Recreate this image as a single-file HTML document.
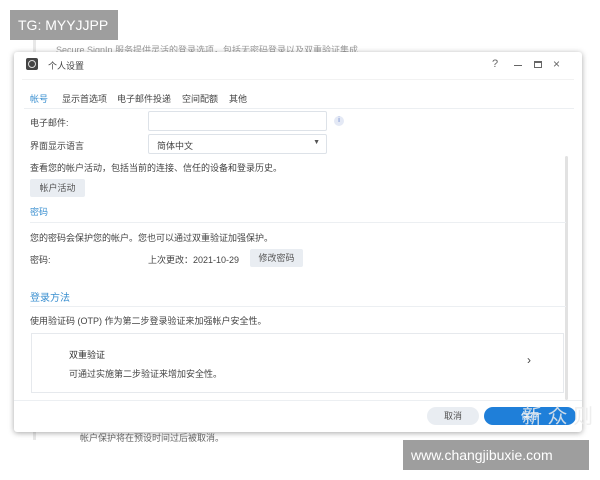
<!DOCTYPE html>
<html><head><meta charset="utf-8"><style>
*{margin:0;padding:0;box-sizing:border-box}
body{width:600px;height:480px;background:#fff;position:relative;overflow:hidden;font-family:"Liberation Sans","Noto Sans CJK SC",sans-serif;font-size:9px;color:#444}
.a{position:absolute;white-space:nowrap}
.btn{position:absolute;background:#e9edf2;border-radius:2px;text-align:center;color:#555}
.blue{color:#3a8fd0}
.line{position:absolute;height:1px;background:#eceff2}
</style></head><body>
<div class="a" style="left:33px;top:40px;width:3px;height:400px;background:#e8e8e8"></div>
<div class="a" style="left:56px;top:43px;color:#999;font-size:9px">Secure SignIn 服务提供灵活的登录选项，包括无密码登录以及双重验证集成</div>
<div class="a" style="left:80px;top:431px;color:#666;font-size:9px">帐户保护将在预设时间过后被取消。</div>
<div class="a" style="left:10px;top:10px;width:108px;height:30px;background:#9e9e9e;color:#fff;font-size:14px;line-height:30px;padding-left:8px">TG: MYYJJPP</div>

<div class="a" style="left:14px;top:52px;width:568px;height:380px;background:#fff;box-shadow:0 1px 6px rgba(0,0,0,.35);border-radius:3px">
 <div class="a" style="left:12px;top:6px;width:12px;height:12px;background:#444;border-radius:2px"><div class="a" style="left:2px;top:2px;width:8px;height:8px;border:1.2px solid #ddd;border-radius:50%"></div></div>
 <div class="a" style="left:34px;top:7px;color:#444">个人设置</div>
 <div class="a" style="left:478px;top:6px;color:#666;font-size:11px">?</div>
 <div class="a" style="left:500px;top:13px;width:8px;height:1px;background:#666"></div>
 <div class="a" style="left:520px;top:9px;width:8px;height:7px;border:1px solid #666;border-top-width:2px"></div>
 <div class="a" style="left:539px;top:5px;color:#666;font-size:12px">×</div>
 <div class="line" style="left:8px;top:27px;width:552px;background:#f2f2f2"></div>
 <div class="a blue" style="left:16px;top:40px">帐号</div>
 <div class="a" style="left:48px;top:40px;color:#444">显示首选项</div>
 <div class="a" style="left:103px;top:40px;color:#444">电子邮件投递</div>
 <div class="a" style="left:168px;top:40px;color:#444">空间配额</div>
 <div class="a" style="left:215px;top:40px;color:#444">其他</div>
 <div class="line" style="left:10px;top:56px;width:550px"></div>
 <div class="a" style="left:16px;top:64px">电子邮件:</div>
 <div class="a" style="left:134px;top:59px;width:179px;height:20px;border:1px solid #dde2e8;border-radius:2px"></div>
 <div class="a" style="left:320px;top:64px;width:10px;height:10px;border-radius:50%;background:#e4e9f5;color:#5a78c8;font-size:7px;text-align:center;line-height:10px">i</div>
 <div class="a" style="left:16px;top:87px">界面显示语言</div>
 <div class="a" style="left:134px;top:82px;width:179px;height:20px;border:1px solid #dde2e8;border-radius:2px;padding:4px 0 0 8px">简体中文<span style="position:absolute;right:6px;top:4px;font-size:7px;color:#555">▼</span></div>
 <div class="a" style="left:551px;top:104px;width:3px;height:244px;background:#e2e2e2;border-radius:2px"></div>
 <div class="a" style="left:16px;top:109px">查看您的帐户活动，包括当前的连接、信任的设备和登录历史。</div>
 <div class="btn" style="left:16px;top:127px;width:55px;height:18px;line-height:18px">帐户活动</div>
 <div class="a blue" style="left:16px;top:153px">密码</div>
 <div class="line" style="left:16px;top:170px;width:536px"></div>
 <div class="a" style="left:16px;top:179px">您的密码会保护您的帐户。您也可以通过双重验证加强保护。</div>
 <div class="a" style="left:16px;top:201px">密码:</div>
 <div class="a" style="left:134px;top:201px">上次更改：2021-10-29</div>
 <div class="btn" style="left:236px;top:197px;width:53px;height:18px;line-height:18px">修改密码</div>
 <div class="a blue" style="left:16px;top:237px;font-size:10px">登录方法</div>
 <div class="line" style="left:16px;top:254px;width:536px"></div>
 <div class="a" style="left:16px;top:262px">使用验证码 (OTP) 作为第二步登录验证来加强帐户安全性。</div>
 <div class="a" style="left:17px;top:281px;width:533px;height:60px;border:1px solid #e6e9ed"></div>
 <div class="a" style="left:55px;top:296px;color:#333">双重验证</div>
 <div class="a" style="left:55px;top:315px">可通过实施第二步验证来增加安全性。</div>
 <div class="a" style="left:513px;top:301px;font-size:12px;color:#444">›</div>
 <div class="line" style="left:0;top:348px;width:568px"></div>
 <div class="btn" style="left:413px;top:355px;width:52px;height:18px;line-height:18px;border-radius:9px;background:#e9edf2">取消</div>
 <div class="a" style="left:470px;top:355px;width:92px;height:18px;border-radius:9px;background:#1f7fd9;color:#fff;text-align:center;line-height:18px">保存</div>
 <div class="a" style="left:508px;top:348px;color:rgba(235,235,235,.85);font-size:20px">新 众 则</div>
</div>
<div class="a" style="left:403px;top:440px;width:186px;height:30px;background:#9e9e9e;color:#fff;font-size:14px;line-height:30px;padding-left:8px">www.changjibuxie.com</div>
</body></html>
